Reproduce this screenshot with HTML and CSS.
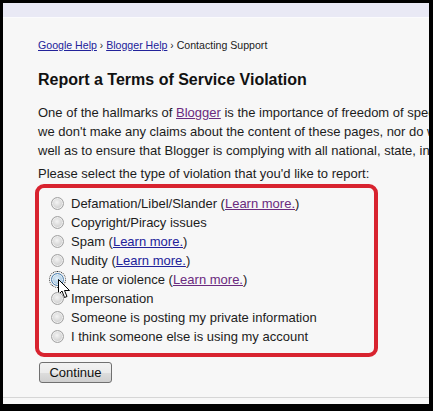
FILE: index.html
```html
<!DOCTYPE html>
<html>
<head>
  <title>Contacting Support</title>
  <link rel="stylesheet" href="styles.css">
</head>
<body>
  <div class="window">
    <div class="topbar"></div>
    <div class="page">
      <div class="crumbs">
        <a href="#">Google Help</a> <span class="sep">&rsaquo;</span>
        <a href="#">Blogger Help</a> <span class="sep">&rsaquo;</span>
        Contacting Support
      </div>

      <h1>Report a Terms of Service Violation</h1>

      <p class="intro">
        One of the hallmarks of <a class="visited" href="#">Blogger</a> is the importance of freedom of speech. Blogger is a provider<br>
        we don't make any claims about the content of these pages, nor do we censor them. We do,<br>
        well as to ensure that Blogger is complying with all national, state, international laws.
      </p>

      <p class="ask">Please select the type of violation that you'd like to report:</p>

      <form class="report">
        <div class="choices">
          <label class="choice"><input type="radio" name="type"><span>Defamation/Libel/Slander (<a class="visited" href="#">Learn more.</a>)</span></label>
          <label class="choice"><input type="radio" name="type"><span>Copyright/Piracy issues</span></label>
          <label class="choice"><input type="radio" name="type"><span>Spam (<a href="#">Learn more.</a>)</span></label>
          <label class="choice"><input type="radio" name="type"><span>Nudity (<a href="#">Learn more.</a>)</span></label>
          <label class="choice hover">
            <input type="radio" name="type"><span>Hate or violence (<a class="visited" href="#">Learn more.</a>)</span>
            <svg class="cursor" width="13" height="20" viewBox="0 0 13 20">
              <path d="M0.5 0.5 L0.5 15.5 L4 12 L6.5 18.5 L9 17.5 L6.5 11.5 L11.5 11.5 Z" fill="#fff" stroke="#000" stroke-width="1"/>
            </svg>
          </label>
          <label class="choice"><input type="radio" name="type"><span>Impersonation</span></label>
          <label class="choice"><input type="radio" name="type"><span>Someone is posting my private information</span></label>
          <label class="choice"><input type="radio" name="type"><span>I think someone else is using my account</span></label>
        </div>
        <button type="button" class="continue">Continue</button>
      </form>
      <div class="rule"></div>
    </div>
  </div>
</body>
</html>
```

FILE: styles.css
```css
body {
  margin: 0;
  padding: 0;
  background-color: #000;
  font-family: 'Liberation Sans', Arial, sans-serif;
  color: #1c1c1c;
}

.window {
  height: 411px;
  box-sizing: border-box;
  border-style: solid;
  border-color: #000;
  border-width: 3px 4px 7px 3px;
  background-color: #f7f7f7;
  overflow: hidden;
}

.topbar {
  height: 14px;
  background-color: #e9e9f5;
  border-bottom: 1px solid #fbfbfd;
}

.page {
  padding: 20px 0 0 35px;
  white-space: nowrap;
}

a {
  color: #22229a;
}

a.visited {
  color: #6a2a7e;
}

.crumbs {
  font-size: 10.6px;
  line-height: 14px;
}

.crumbs .sep {
  font-size: 10px;
}

h1 {
  margin: 17px 0 0 0;
  font-size: 16px;
  line-height: 20px;
  color: #111;
}

.intro {
  margin: 13px 0 0 0;
  font-size: 13px;
  line-height: 19px;
}

.ask {
  margin: 4px 0 0 0;
  font-size: 13px;
  line-height: 19px;
}

.report {
  margin: 0;
}

.choices {
  width: 323px;
  margin: 1px 0 0 -3px;
  padding: 6px 0 7px 12px;
  border: 4px solid #d8232f;
  border-radius: 9px;
}

.choice {
  display: flex;
  align-items: center;
  gap: 7px;
  height: 19px;
  font-size: 13px;
  position: relative;
}

.choice input {
  appearance: none;
  -webkit-appearance: none;
  margin: 0;
  width: 13px;
  height: 13px;
  border-radius: 50%;
  border: 1px solid #a2a2a2;
  background: radial-gradient(circle at 45% 40%, #f4f4f4 0, #d6d6d6 55%, #c4c4c4 100%);
  box-shadow: inset 0 0 0 1px #eee;
}

.choice.hover input {
  border-color: #4a7fb0;
  background: radial-gradient(circle at 45% 40%, #e6f2fb 0, #a9cbe6 55%, #7fa9cf 100%);
  outline: 1px dotted #222;
  outline-offset: 1px;
}

.cursor {
  position: absolute;
  left: 7px;
  top: 9px;
}

.continue {
  margin: 5px 0 0 1px;
  width: 73px;
  height: 21px;
  padding: 0;
  font-family: 'Liberation Sans', Arial, sans-serif;
  font-size: 13px;
  color: #111;
  border: 1px solid #707070;
  border-radius: 3px;
  background: linear-gradient(#f2f2f2, #ebebeb 50%, #dddddd 51%, #cfcfcf);
}

.rule {
  margin: 14px 0 0 -35px;
  height: 1px;
  background-color: #d6d6d6;
}
```
